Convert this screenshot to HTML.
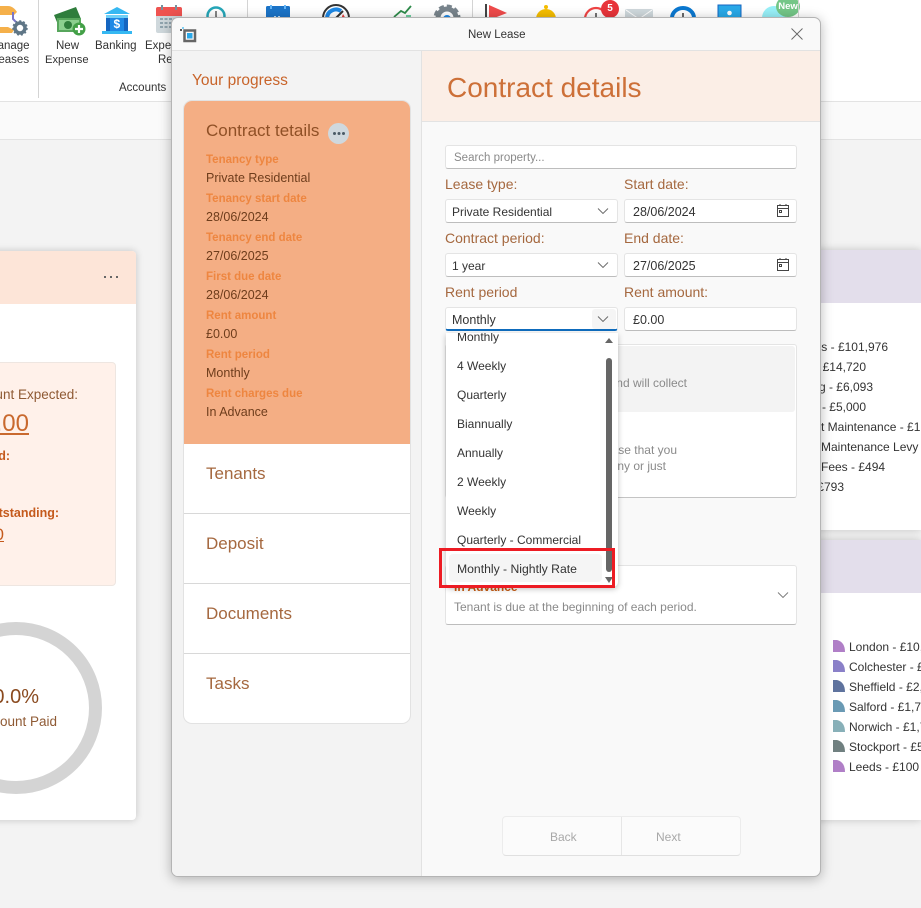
<!DOCTYPE html>
<html><head><meta charset="utf-8"><style>
html,body{margin:0;padding:0;width:921px;height:908px;overflow:hidden}
body{background:#f3f3f3;font-family:"Liberation Sans",sans-serif;font-size:12px;color:#333}
#w{position:relative;width:921px;height:908px;overflow:hidden;background:#f3f3f3}
.t{position:absolute;white-space:nowrap;line-height:16px}
.a{position:absolute}
.lab{font-size:14px;color:#a5683f;line-height:18px}
.box{position:absolute;background:#fff;border:1px solid #e4e4e4;border-bottom-color:#bdbdbd;border-radius:3px;box-sizing:border-box}
.sm{color:#ee8640;font-weight:bold;font-size:11.5px}
.val{color:#6e3d1c;font-size:12.500px}
.sec{font-size:17px;color:#a5683f;line-height:20px}
.it{font-size:12px;color:#333}
.dt{font-size:12.500px;color:#333}
.tb{font-size:11.500px;color:#333}
svg{position:absolute;overflow:visible}
</style></head><body><div id="w">

<div class="a" style="left:0;top:0;width:921px;height:101px;background:#fff"></div>
<div class="a" style="left:0;top:101px;width:921px;height:39px;background:#fafafa;border-top:1px solid #e3e3e3;border-bottom:1px solid #e3e3e3;box-sizing:border-box"></div>
<div class="a" style="left:38px;top:0;width:1px;height:98px;background:#d4d4d4"></div>
<div class="a" style="left:247px;top:0;width:1px;height:18px;background:#d4d4d4"></div>
<div class="a" style="left:472px;top:0;width:1px;height:18px;background:#d4d4d4"></div>

<svg style="left:0;top:0" width="40" height="40">
<path d="M0 6h8c4 0 7 3 9 6l-3 3H0z" fill="#f5b04a"/><path d="M0 27h8l6 3-2 3H0z" fill="#f5b04a"/>
<path d="M13 12v7l3 3" stroke="#7a76c8" stroke-width="2" fill="none"/>
<circle cx="20" cy="28" r="5" fill="none" stroke="#5f7686" stroke-width="3.500"/><circle cx="20" cy="28" r="7" fill="none" stroke="#5f7686" stroke-width="1.500" stroke-dasharray="2 2"/>
</svg>
<svg style="left:52px;top:5px" width="34" height="32">
<path d="M2 10L24 2l5 12-22 8z" fill="#2f7d3c"/><rect x="5" y="13" width="24" height="14" fill="#57a65c"/><rect x="7" y="15" width="20" height="10" fill="#8ccf8f"/>
<circle cx="16" cy="20" r="4" fill="#2f7d3c"/><circle cx="27" cy="24" r="6.500" fill="#43a047"/><path d="M27 20v8M23 24h8" stroke="#fff" stroke-width="2.200"/>
</svg>
<svg style="left:101px;top:6px" width="34" height="28">
<path d="M3 8L16 1l13 7z" fill="#35b8f2"/><rect x="5" y="9" width="22" height="3" fill="#6fd0f7"/><rect x="5" y="12" width="22" height="13" fill="#1565c0"/><rect x="9" y="12" width="14" height="13" fill="#1e88e5"/>
<rect x="1" y="25" width="30" height="3" fill="#35b8f2"/><text x="12.500" y="22" font-size="12" font-weight="bold" fill="#fff" font-family="Liberation Sans">$</text>
</svg>
<svg style="left:155px;top:5px" width="28" height="28">
<rect x="1" y="2" width="26" height="26" rx="2" fill="#cfd8dc"/><path d="M1 4q0-2 2-2h22q2 0 2 2v7H1z" fill="#ef5350"/>
<path d="M7 0v5M21 0v5" stroke="#78909c" stroke-width="2"/>
<path d="M5 14h18M5 18h18M5 22h18" stroke="#90a4ae" stroke-width="2" stroke-dasharray="3 1.500"/>
</svg>
<svg style="left:205px;top:4px" width="24" height="16">
<circle cx="11" cy="12" r="8.500" fill="#fff" stroke="#26a6b8" stroke-width="2.500"/><path d="M11 7v6l3 2" stroke="#444" stroke-width="1.300" fill="none"/><circle cx="17" cy="17" r="3" fill="#f0b429"/>
</svg>
<svg style="left:266px;top:6px" width="24" height="14"><rect width="24" height="14" rx="1.500" fill="#1b74c8"/><rect x="4" y="-1" width="2" height="4" fill="#64b5f6"/><rect x="18" y="-1" width="2" height="4" fill="#64b5f6"/><path d="M8 11h8" stroke="#bbdefb" stroke-width="2" stroke-dasharray="2 2"/></svg>
<svg style="left:321px;top:3px" width="30" height="16"><circle cx="15" cy="15" r="13" fill="#fff" stroke="#333" stroke-width="2"/><path d="M6 15a9 9 0 0 1 14-7" fill="none" stroke="#1e88e5" stroke-width="4"/><path d="M15 15l7-7" stroke="#333" stroke-width="2"/><path d="M22 11l3 5h-5z" fill="#e53935"/></svg>
<svg style="left:393px;top:4px" width="24" height="14"><path d="M1 13l7-6 4 2 6-7" fill="none" stroke="#2e8b4a" stroke-width="1.800"/><rect x="13" y="11" width="5" height="4" fill="#6fd0a0"/></svg>
<svg style="left:434px;top:4px" width="26" height="16"><circle cx="13" cy="14" r="9" fill="none" stroke="#78848c" stroke-width="5"/><circle cx="13" cy="14" r="12" fill="none" stroke="#78848c" stroke-width="3" stroke-dasharray="5 3"/><circle cx="13" cy="15" r="4" fill="#1e88e5"/></svg>
<svg style="left:484px;top:4px" width="24" height="16"><rect x="1" y="0" width="2" height="16" fill="#444"/><path d="M5 1l18 8-18 7z" fill="#ef4b4b"/></svg>
<svg style="left:535px;top:3px" width="22" height="16"><path d="M1 16a10 10 0 0 1 20 0z" fill="#f5bd00"/><circle cx="11" cy="4" r="2" fill="#f5bd00"/></svg>
<svg style="left:582px;top:4px" width="28" height="16"><circle cx="14" cy="15" r="11" fill="#fff" stroke="#ef4444" stroke-width="2.200"/><path d="M14 9v8" stroke="#444" stroke-width="1.500"/></svg>
<div class="a" style="left:601px;top:0;width:18px;height:18px;border-radius:50%;background:#e8343a;color:#fff;font-size:10px;font-weight:bold;text-align:center;line-height:17px">5</div>
<svg style="left:625px;top:9px" width="28" height="10"><path d="M0 2q0-2 2-2h24q2 0 2 2v8H0z" fill="#cfd8dc"/><path d="M1 1l13 9 13-9" fill="none" stroke="#fff" stroke-width="1"/></svg>
<svg style="left:669px;top:4px" width="28" height="16"><path d="M3 14a11 10 0 1 1 22 0" fill="none" stroke="#0b78d0" stroke-width="4"/><path d="M14 9v8" stroke="#444" stroke-width="1.600"/></svg>
<svg style="left:718px;top:5px" width="24" height="14"><rect width="23" height="14" fill="#29a9e8" stroke="#1565c0" stroke-width="1"/><circle cx="11.500" cy="8" r="2.300" fill="#fff"/></svg>
<svg style="left:761px;top:5px" width="26" height="14"><circle cx="13" cy="13" r="12" fill="#98f0f8"/></svg>
<div class="a" style="left:776px;top:-4px;width:24px;height:21px;border-radius:50%;background:#74c687;color:#fff;font-size:9.500px;font-weight:bold;text-align:center;line-height:22px">New</div>
<div class="a" style="left:798px;top:0;width:1px;height:18px;background:#d4d4d4"></div>

<div class="t tb" style="left:-12px;top:38px;line-height:17px">Manage</div>
<div class="t tb" style="left:-8px;top:52px;line-height:17px">Leases</div>
<div class="t tb" style="left:56px;top:38px;line-height:17px">New</div>
<div class="t tb" style="left:45px;top:52px;line-height:17px;font-size:11.200px">Expense</div>
<div class="t tb" style="left:95px;top:38px;line-height:17px">Banking</div>
<div class="t tb" style="left:145px;top:38px;line-height:17px">Expected</div>
<div class="t tb" style="left:158px;top:52px;line-height:17px">Rent</div>
<div class="t tb" style="left:119px;top:80px">Accounts</div>

<!-- left card -->
<div class="a" style="left:-20px;top:251px;width:156px;height:569px;background:#fff;border-radius:4px;box-shadow:0 0 8px rgba(0,0,0,.2);overflow:hidden">
<div class="a" style="left:0;top:0;width:156px;height:53px;background:#fde5d8"></div>
<div class="a" style="left:0;top:111px;width:136px;height:224px;background:#fff1ea;border:1px solid #eee6e1;border-radius:4px;box-sizing:border-box"></div>
</div>
<div class="a" style="left:104px;top:276px;width:2px;height:2px;background:#666;box-shadow:6px 0 #666,12px 0 #666"></div>
<div class="t" style="right:843px;top:387px;font-size:13.500px;color:#8f5a34">Amount Expected:</div>
<div class="t" style="right:892px;top:409px;font-size:24px;line-height:30px;color:#c9692e;text-decoration:underline">£0.00</div>
<div class="t" style="right:911px;top:448px;font-weight:bold;color:#c55a1c;font-size:12.500px">Paid:</div>
<div class="t" style="right:862px;top:505px;font-weight:bold;color:#c55a1c;font-size:12.500px">Outstanding:</div>
<div class="t" style="right:917px;top:525px;font-size:17px;line-height:20px;color:#c55a1c;text-decoration:underline">£0.00</div>
<svg style="left:0;top:600px" width="120" height="210"><circle cx="16" cy="108" r="79.500" fill="none" stroke="#d4d4d4" stroke-width="13"/></svg>
<div class="t" style="right:882px;top:685px;font-size:20px;line-height:24px;color:#8a4a1f">0.0%</div>
<div class="t" style="right:864px;top:714px;font-size:13.500px;color:#8f5a34">Amount Paid</div>

<!-- right cards -->
<div class="a" style="left:800px;top:250px;width:121px;height:280px;background:#fff;box-shadow:0 0 8px rgba(0,0,0,.2)"><div style="height:53px;background:#e3deeb"></div></div>
<div class="a" style="left:800px;top:540px;width:121px;height:280px;background:#fff;box-shadow:0 0 8px rgba(0,0,0,.2)"><div style="height:53px;background:#e3deeb"></div></div>
<div class="t it" style="right:33px;top:339px">Expenses - £101,976</div>
<div class="t it" style="right:55px;top:359px">Fee - £14,720</div>
<div class="t it" style="right:48px;top:379px">Building - £6,093</div>
<div class="t it" style="right:55px;top:399px">Loan - £5,000</div>
<div class="t it" style="left:821px;top:419px;width:100px;overflow:hidden">t Maintenance - £1,200</div>
<div class="t it" style="left:821px;top:439px;width:100px;overflow:hidden">Maintenance Levy - £900</div>
<div class="t it" style="left:821px;top:459px">Fees - £494</div>
<div class="t it" style="right:77px;top:479px">Tax £793</div>

<svg style="left:833px;top:640px" width="12" height="134">
<path d="M0 0h4q8 2 8 12H0z" fill="#b07fc7"/><path d="M0 20h4q8 2 8 12H0z" fill="#8a80c8"/><path d="M0 40h4q8 2 8 12H0z" fill="#5f739e"/><path d="M0 60h4q8 2 8 12H0z" fill="#6a9ab4"/><path d="M0 80h4q8 2 8 12H0z" fill="#88b0b8"/><path d="M0 100h4q8 2 8 12H0z" fill="#708080"/><path d="M0 120h4q8 2 8 12H0z" fill="#b07fc7"/>
</svg>
<div class="t it" style="left:849px;top:639px;width:72px;overflow:hidden">London - £10,000</div>
<div class="t it" style="left:849px;top:659px;width:72px;overflow:hidden">Colchester - £5,000</div>
<div class="t it" style="left:849px;top:679px;width:72px;overflow:hidden">Sheffield - £2,000</div>
<div class="t it" style="left:849px;top:699px;width:72px;overflow:hidden">Salford - £1,790</div>
<div class="t it" style="left:849px;top:719px;width:72px;overflow:hidden">Norwich - £1,700</div>
<div class="t it" style="left:849px;top:739px;width:72px;overflow:hidden">Stockport - £500</div>
<div class="t it" style="left:849px;top:759px">Leeds - £100</div>

<!-- modal -->
<div class="a" style="left:171px;top:17px;width:650px;height:860px;background:#f9f9f9;border:1px solid #b4b4b4;border-radius:7px;box-sizing:border-box;box-shadow:0 2px 12px rgba(0,0,0,.28);overflow:hidden">
<div class="a" style="left:0;top:33px;width:249px;height:825px;background:#f3f3f3;border-right:1px solid #e2e2e2"></div>
<div class="a" style="left:0;top:32px;width:650px;height:1px;background:#e2e2e2"></div>
<div class="a" style="left:250px;top:33px;width:400px;height:70px;background:#fbeee6;border-bottom:1px solid #e3e3e3"></div>
</div>
<svg style="left:180px;top:27px" width="18" height="18"><rect x="4.500" y="3.500" width="10.500" height="10.500" fill="none" stroke="#666" stroke-width="2.500"/><rect x="7" y="6" width="5.500" height="5.500" fill="#2aa8e8"/><rect x="0" y="2" width="2" height="2" fill="#555"/><rect x="2" y="0" width="2" height="2" fill="#7fd0f5"/></svg>
<div class="t tb" style="left:468px;top:27px">New Lease</div>
<svg style="left:791px;top:28px" width="12" height="12"><path d="M.5.5l11 11M11.500.5l-11 11" stroke="#666" stroke-width=".9"/></svg>

<div class="t" style="left:192px;top:72px;font-size:15.500px;line-height:18px;color:#c8642a">Your progress</div>

<!-- progress panel -->
<div class="a" style="left:183px;top:100px;width:228px;height:624px;background:#fff;border:1px solid #e2e2e2;border-radius:9px;box-sizing:border-box;overflow:hidden">
<div class="a" style="left:0;top:0;width:228px;height:343px;background:#f4ae84"></div>
<div class="a" style="left:0;top:412px;width:228px;height:1px;background:#d8d8d8"></div>
<div class="a" style="left:0;top:482px;width:228px;height:1px;background:#d8d8d8"></div>
<div class="a" style="left:0;top:552px;width:228px;height:1px;background:#d8d8d8"></div>
</div>
<div class="t sec" style="left:206px;top:121px;color:#8f5026">Contract tetails</div>
<div class="a" style="left:328px;top:123px;width:21px;height:21px;border-radius:50%;background:#cfd8de"></div>
<div class="a" style="left:333px;top:132px;width:3px;height:3px;border-radius:50%;background:#4a5a66;box-shadow:4.500px 0 #4a5a66,9px 0 #4a5a66"></div>
<div class="t sm" style="left:206px;top:152px">Tenancy type</div><div class="t val" style="left:206px;top:170px">Private Residential</div>
<div class="t sm" style="left:206px;top:191px">Tenancy start date</div><div class="t val" style="left:206px;top:209px">28/06/2024</div>
<div class="t sm" style="left:206px;top:230px">Tenancy end date</div><div class="t val" style="left:206px;top:248px">27/06/2025</div>
<div class="t sm" style="left:206px;top:269px">First due date</div><div class="t val" style="left:206px;top:287px">28/06/2024</div>
<div class="t sm" style="left:206px;top:308px">Rent amount</div><div class="t val" style="left:206px;top:326px">£0.00</div>
<div class="t sm" style="left:206px;top:347px">Rent period</div><div class="t val" style="left:206px;top:365px">Monthly</div>
<div class="t sm" style="left:206px;top:386px">Rent charges due</div><div class="t val" style="left:206px;top:404px">In Advance</div>
<div class="t sec" style="left:206px;top:464px">Tenants</div>
<div class="t sec" style="left:206px;top:534px">Deposit</div>
<div class="t sec" style="left:206px;top:604px">Documents</div>
<div class="t sec" style="left:206px;top:674px">Tasks</div>

<div class="t" style="left:447px;top:70px;font-size:28px;line-height:36px;color:#cd7038">Contract details</div>

<!-- form -->
<div class="box" style="left:445px;top:145px;width:352px;height:24px"></div>
<div class="t tb" style="left:454px;top:150px;line-height:17px;color:#8a8a8a">Search property...</div>
<div class="t lab" style="left:445px;top:175px">Lease type:</div>
<div class="t lab" style="left:624px;top:175px">Start date:</div>
<div class="box" style="left:445px;top:199px;width:173px;height:24px"></div>
<div class="box" style="left:624px;top:199px;width:173px;height:24px"></div>
<div class="t it" style="left:452px;top:204px">Private Residential</div>
<div class="t dt" style="left:633px;top:204px">28/06/2024</div>
<div class="t lab" style="left:445px;top:229px">Contract period:</div>
<div class="t lab" style="left:624px;top:229px">End date:</div>
<div class="box" style="left:445px;top:253px;width:173px;height:24px"></div>
<div class="box" style="left:624px;top:253px;width:173px;height:24px"></div>
<div class="t it" style="left:452px;top:258px">1 year</div>
<div class="t dt" style="left:633px;top:258px">27/06/2025</div>
<div class="t lab" style="left:445px;top:283px">Rent period</div>
<div class="t lab" style="left:624px;top:283px">Rent amount:</div>
<div class="box" style="left:445px;top:307px;width:173px;height:24px;border-bottom:2px solid #0f6cbd"></div>
<div class="a" style="left:592px;top:309px;width:24px;height:20px;background:#f5f5f5;border-radius:3px"></div>
<div class="box" style="left:624px;top:307px;width:173px;height:24px"></div>
<div class="t dt" style="left:452px;top:312px">Monthly</div>
<div class="t dt" style="left:633px;top:312px">£0.00</div>
<svg style="left:0;top:0;pointer-events:none" width="921" height="908">
<path d="M598 208.500l5 5 5-5M598 262.500l5 5 5-5M598 316.500l5 5 5-5" fill="none" stroke="#666" stroke-width=".9"/>
<g fill="none" stroke="#444" stroke-width="1"><rect x="777.500" y="205.500" width="11" height="11"/><path d="M777.500 208.500h11M780 204v2M786 204v2"/><rect x="779.500" y="210.500" width="2" height="2"/>
<rect x="777.500" y="259.500" width="11" height="11"/><path d="M777.500 262.500h11M780 258v2M786 258v2"/><rect x="779.500" y="264.500" width="2" height="2"/></g>
</svg>

<!-- cards behind dropdown -->
<div class="box" style="left:445px;top:344px;width:352px;height:154px;border-bottom-color:#c4c4c4"></div>
<div class="a" style="left:447px;top:346px;width:348px;height:66px;background:#f3f3f3;border-radius:3px"></div>
<div class="t" style="right:234px;top:375px;color:#8a8a8a">and will collect</div>
<div class="t" style="right:244px;top:442px;color:#8a8a8a">ase that you</div>
<div class="t" style="right:255px;top:458px;color:#8a8a8a">any or just</div>
<div class="box" style="left:445px;top:565px;width:352px;height:60px"></div>
<div class="t" style="left:454px;top:579px;color:#c55a11;font-weight:bold">In Advance</div>
<div class="t" style="left:454px;top:599px;color:#8a8a8a">Tenant is due at the beginning of each period.</div>
<svg style="left:778px;top:592px" width="11" height="7"><path d="M0 .5l5 5 5-5" fill="none" stroke="#777" stroke-width=".9"/></svg>

<!-- dropdown -->
<div class="a" style="left:446px;top:333px;width:172px;height:254px;background:#fff;border-radius:0 0 5px 5px;box-shadow:0 2px 6px rgba(0,0,0,.25);overflow:hidden">
<div class="t it" style="left:11px;top:-4px">Monthly</div>
<div class="t it" style="left:11px;top:25px">4 Weekly</div>
<div class="t it" style="left:11px;top:54px">Quarterly</div>
<div class="t it" style="left:11px;top:83px">Biannually</div>
<div class="t it" style="left:11px;top:112px">Annually</div>
<div class="t it" style="left:11px;top:141px">2 Weekly</div>
<div class="t it" style="left:11px;top:170px">Weekly</div>
<div class="t it" style="left:11px;top:199px">Quarterly - Commercial</div>
<div class="a" style="left:3px;top:221px;width:153px;height:28px;background:#f5f5f5;border-radius:4px"></div>
<div class="t it" style="left:11px;top:228px;font-size:12.200px">Monthly - Nightly Rate</div>
<div class="a" style="left:160px;top:25px;width:6px;height:214px;background:#666;border-radius:3px"></div>
</div>
<svg style="left:605px;top:336px" width="8" height="248"><path d="M0 7l4-5 4 5z" fill="#666"/><path d="M0 241h8l-4 6z" fill="#666"/></svg>
<div class="a" style="left:439px;top:548px;width:176px;height:40px;border:3px solid #ed1c24;box-sizing:border-box"></div>

<!-- buttons -->
<div class="a" style="left:502px;top:816px;width:239px;height:40px;background:#fbfbfb;border:1px solid #ececec;border-bottom-color:#e0e0e0;border-radius:4px;box-sizing:border-box"></div>
<div class="a" style="left:621px;top:817px;width:1px;height:38px;background:#e6e6e6"></div>
<div class="t" style="left:550px;top:829px;color:#a8a8a8">Back</div>
<div class="t" style="left:656px;top:829px;color:#a8a8a8">Next</div>
</div></body></html>
